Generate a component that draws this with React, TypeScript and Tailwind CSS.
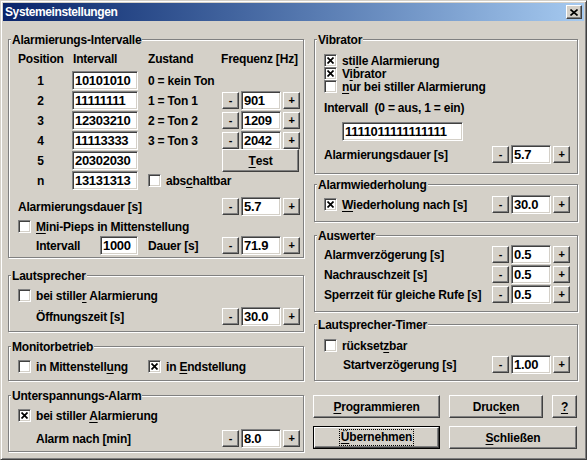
import React from 'react';

// classic 3D borders
const raised =
  'border border-t-white border-l-white border-r-[#404040] border-b-[#404040] bg-[#d4d0c8] shadow-[inset_-1px_-1px_0_#808080]';
const sunken =
  'border border-t-[#808080] border-l-[#808080] border-r-white border-b-white bg-white shadow-[inset_1px_1px_0_#404040,inset_-1px_-1px_0_#d4d0c8]';

function U({ children }: { children: React.ReactNode }) {
  return <span className="underline decoration-1 underline-offset-[2px]">{children}</span>;
}

function Check({ checked = false }: { checked?: boolean }) {
  return (
    <span className={`${sunken} flex h-[13px] w-[13px] shrink-0 items-center justify-center`}>
      {checked && (
        <svg width="7" height="7" viewBox="0 0 7 7">
          <path d="M0.5 0.5L6.5 6.5M6.5 0.5L0.5 6.5" stroke="#000" strokeWidth="1.7" />
        </svg>
      )}
    </span>
  );
}

function Field({ value, className = '' }: { value: string; className?: string }) {
  return (
    <input
      readOnly
      value={value}
      className={`${sunken} h-[19px] shrink-0 pl-[2px] text-[13px] font-bold tracking-[-0.3px] text-black outline-none ${className}`}
    />
  );
}

function Tiny({ label }: { label: string }) {
  return (
    <div className={`${raised} flex h-[17px] w-[17px] shrink-0 items-center justify-center text-[11px] leading-none`}>
      {label}
    </div>
  );
}

function Spin({ value }: { value: string }) {
  return (
    <div className="flex shrink-0 items-center gap-[2px]">
      <Tiny label="-" />
      <Field value={value} className="w-[40px]" />
      <Tiny label="+" />
    </div>
  );
}

function Btn({
  children,
  className = '',
  isDefault = false,
}: {
  children: React.ReactNode;
  className?: string;
  isDefault?: boolean;
}) {
  return (
    <div className={`h-[23px] shrink-0 ${isDefault ? 'border border-black' : ''} ${className}`}>
      <div className={`${raised} flex h-full w-full items-center justify-center`}>{children}</div>
    </div>
  );
}

function Group({
  title,
  className = '',
  pad = 'pl-[9px] pr-[3px]',
  children,
}: {
  title: string;
  className?: string;
  pad?: string;
  children: React.ReactNode;
}) {
  return (
    <div className={`shrink-0 border border-[#808080] shadow-[inset_1px_1px_0_#fff,1px_1px_0_#fff] ${className}`}>
      <div className="-mt-[7px] ml-[2px] h-[14px] w-fit bg-[#d4d0c8] px-px leading-[14px]">{title}</div>
      <div className={pad}>{children}</div>
    </div>
  );
}

function CheckRow({
  checked,
  className = '',
  children,
}: {
  checked?: boolean;
  className?: string;
  children: React.ReactNode;
}) {
  return (
    <div className={`flex items-center gap-[5px] ${className}`}>
      <Check checked={checked} />
      <span>{children}</span>
    </div>
  );
}

const rows = [
  { pos: '1', bits: '10101010', state: '0 = kein Ton', freq: '' },
  { pos: '2', bits: '11111111', state: '1 = Ton 1', freq: '901' },
  { pos: '3', bits: '12303210', state: '2 = Ton 2', freq: '1209' },
  { pos: '4', bits: '11113333', state: '3 = Ton 3', freq: '2042' },
  { pos: '5', bits: '20302030', state: '', freq: 'test' },
  { pos: 'n', bits: '13131313', state: 'check', freq: '' },
];

export default function App() {
  return (
    <div className="h-[460px] w-[587px] border border-t-[#d4d0c8] border-l-[#d4d0c8] border-r-[#404040] border-b-[#404040] bg-[#d4d0c8] p-[2px] font-['Liberation_Sans',Arial,sans-serif] text-[12px] font-bold leading-[14px] tracking-[-0.2px] text-black shadow-[inset_1px_1px_0_#fff,inset_-1px_-1px_0_#808080]">
      {/* title bar */}
      <div className="flex h-[18px] items-center justify-between bg-gradient-to-r from-[#0a246a] to-[#a6caf0] pl-[2px] pr-[2px]">
        <span className="text-[12px] tracking-[-0.4px] text-white">Systemeinstellungen</span>
        <div className={`${raised} flex h-[14px] w-[16px] items-center justify-center`}>
          <svg width="8" height="7" viewBox="0 0 8 7">
            <path d="M0.5 0.5L7.5 6.5M7.5 0.5L0.5 6.5" stroke="#000" strokeWidth="1.6" />
          </svg>
        </div>
      </div>

      <div className="flex gap-[10px] pl-[5px] pt-[18px]">
        {/* left column */}
        <div className="flex w-[296px] flex-col">
          <Group title="Alarmierungs-Intervalle" className="h-[219px]">
            <div className="mt-[2px] flex h-[20px] items-center">
              <span className="w-[45px] text-center">Position</span>
              <span className="ml-[9px] w-[76px] pl-px">Intervall</span>
              <span className="w-[73px]">Zustand</span>
              <span>Frequenz [Hz]</span>
            </div>
            <div className="mt-[2px]">
              {rows.map((r) => (
                <div key={r.pos} className="flex h-[20px] items-start">
                  <span className="flex h-[19px] w-[45px] items-center justify-center">{r.pos}</span>
                  <Field value={r.bits} className="ml-[9px] w-[66px]" />
                  <div className="ml-[10px] flex h-[19px] w-[74px] items-center">
                    {r.state === 'check' ? (
                      <CheckRow>
                        abs<U>c</U>haltbar
                      </CheckRow>
                    ) : (
                      r.state
                    )}
                  </div>
                  <div className="flex h-[19px] w-[78px] items-center">
                    {r.freq === 'test' ? (
                      <Btn className="h-[18px] w-[77px]">
                        <U>T</U>est
                      </Btn>
                    ) : r.freq ? (
                      <Spin value={r.freq} />
                    ) : null}
                  </div>
                </div>
              ))}
            </div>
            <div className="mt-[6px] flex h-[19px] items-center justify-between">
              <span>Alarmierungsdauer [s]</span>
              <Spin value="5.7" />
            </div>
            <CheckRow className="mt-[2px] h-[17px]">
              <U>M</U>ini-Pieps in Mittenstellung
            </CheckRow>
            <div className="mt-[1px] flex h-[19px] items-center">
              <span className="w-[82px] pl-[18px]">Intervall</span>
              <Field value="1000" className="w-[38px]" />
              <span className="ml-[10px] w-[74px]">Dauer [s]</span>
              <Spin value="71.9" />
            </div>
          </Group>

          <Group title="Lautsprecher" className="mt-[17px] h-[57px]">
            <CheckRow className="mt-[4px] h-[17px]">
              bei stille<U>r</U> Alarmierung
            </CheckRow>
            <div className="mt-[3px] flex h-[19px] items-center justify-between">
              <span className="pl-[18px]">Öffnungszeit [s]</span>
              <Spin value="30.0" />
            </div>
          </Group>

          <Group title="Monitorbetrieb" className="mt-[14px] h-[35px]">
            <div className="mt-[4px] flex h-[17px] items-center">
              <CheckRow className="w-[130px]">
                in Mittenstell<U>u</U>ng
              </CheckRow>
              <CheckRow checked>
                in <U>E</U>ndstellung
              </CheckRow>
            </div>
          </Group>

          <Group title="Unterspannungs-Alarm" className="mt-[14px] h-[57px]">
            <CheckRow checked className="mt-[4px] h-[17px]">
              bei stiller <U>A</U>larmierung
            </CheckRow>
            <div className="mt-[5px] flex h-[19px] items-center justify-between">
              <span className="pl-[18px]">Alarm nach [min]</span>
              <Spin value="8.0" />
            </div>
          </Group>
        </div>

        {/* right column */}
        <div className="flex w-[264px] flex-col">
          <Group title="Vibrator" className="h-[135px]" pad="pl-[9px] pr-[7px]">
            <div className="mt-[7px]">
              <CheckRow checked className="h-[13px]">
                sti<U>l</U>le Alarmierung
              </CheckRow>
              <CheckRow checked className="h-[13px]">
                V<U>i</U>brator
              </CheckRow>
              <CheckRow className="h-[13px]">
                <U>n</U>ur bei stiller Alarmierung
              </CheckRow>
            </div>
            <div className="mt-[8px] h-[14px] whitespace-pre">Intervall  (0 = aus, 1 = ein)</div>
            <Field value="1111011111111111" className="ml-[18px] mt-[7px] w-[121px]" />
            <div className="mt-[4px] flex h-[19px] items-center justify-between">
              <span>Alarmierungsdauer [s]</span>
              <Spin value="5.7" />
            </div>
          </Group>

          <Group title="Alarmwiederholung" className="mt-[10px] h-[38px]" pad="pl-[9px] pr-[7px]">
            <div className="mt-[3px] flex h-[19px] items-center justify-between">
              <CheckRow checked>
                <U>W</U>iederholung nach [s]
              </CheckRow>
              <Spin value="30.0" />
            </div>
          </Group>

          <Group title="Auswerter" className="mt-[13px] h-[77px]" pad="pl-[9px] pr-[7px]">
            <div className="mt-[2px]">
              {['Alarmverzögerung [s]', 'Nachrauschzeit [s]', 'Sperrzeit für gleiche Rufe [s]'].map((t) => (
                <div key={t} className="flex h-[20px] items-start justify-between">
                  <span className="flex h-[19px] items-center">{t}</span>
                  <Spin value="0.5" />
                </div>
              ))}
            </div>
          </Group>

          <Group title="Lautsprecher-Timer" className="mt-[12px] h-[57px]" pad="pl-[9px] pr-[7px]">
            <CheckRow className="mt-[5px] h-[17px]">
              rückset<U>z</U>bar
            </CheckRow>
            <div className="mt-[1px] flex h-[19px] items-center justify-between">
              <span className="pl-[19px]">Startverzögerung [s]</span>
              <Spin value="1.00" />
            </div>
          </Group>

          <div className="-ml-px mt-[14px] flex gap-[9px]">
            <Btn className="w-[127px]">
              <U>P</U>rogrammieren
            </Btn>
            <Btn className="w-[94px]">
              Druc<U>k</U>en
            </Btn>
            <Btn className="w-[25px]">
              <U>?</U>
            </Btn>
          </div>
          <div className="-ml-px mt-[8px] flex gap-[9px]">
            <Btn isDefault className="w-[127px]">
              <span className="border border-dotted border-black px-px leading-[15px]">
                <U>Ü</U>bernehmen
              </span>
            </Btn>
            <Btn className="w-[128px]">
              <U>S</U>chließen
            </Btn>
          </div>
        </div>
      </div>
    </div>
  );
}
